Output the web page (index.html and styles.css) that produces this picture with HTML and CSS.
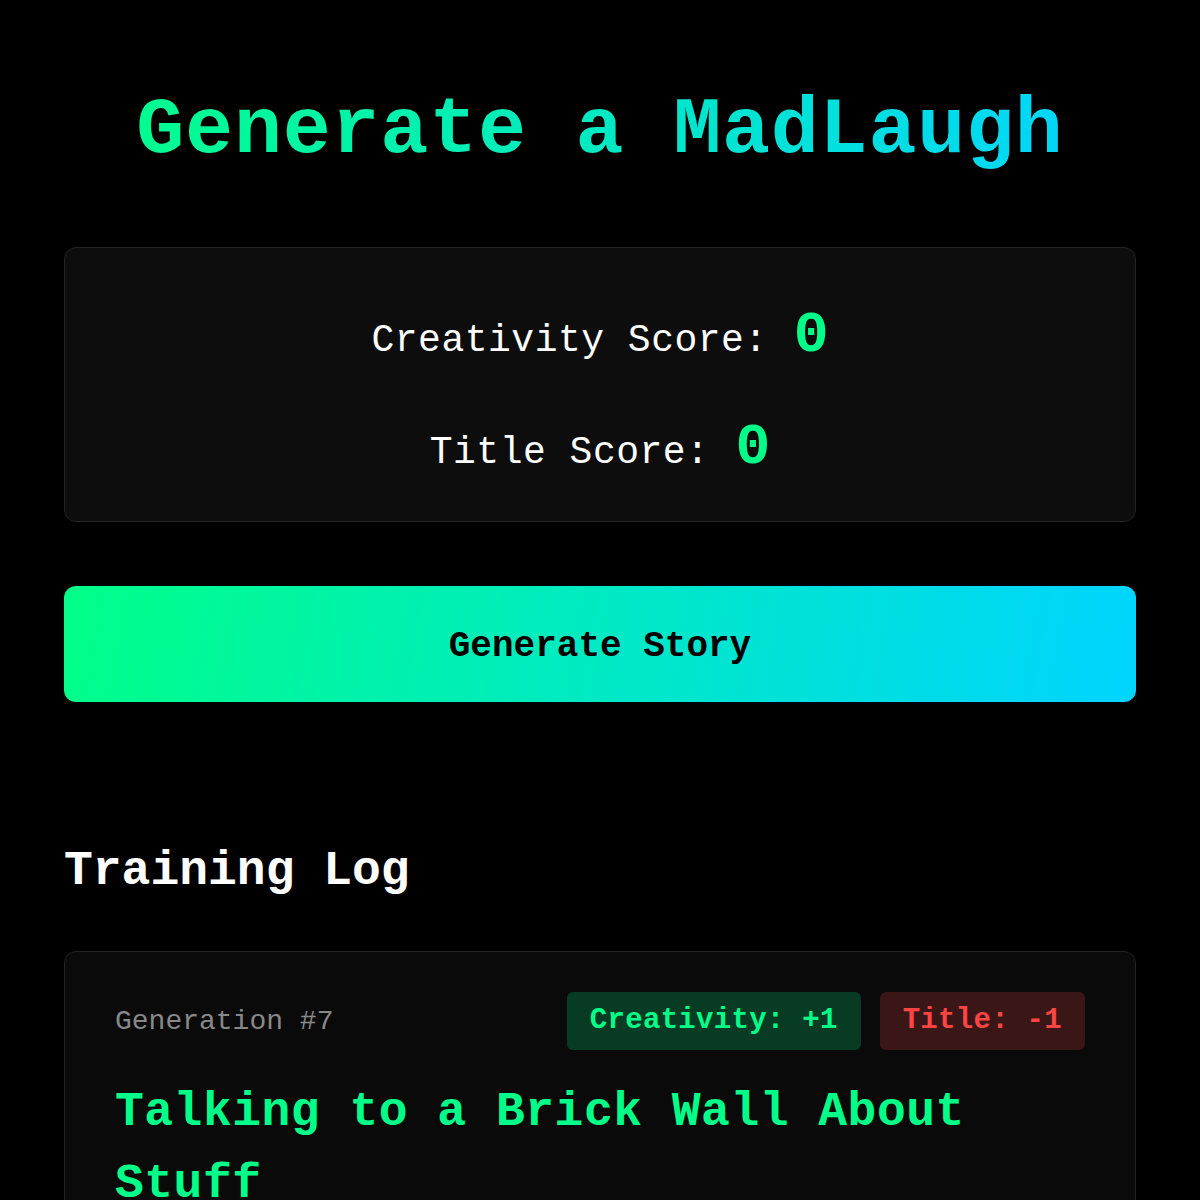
FILE: index.html
```html
<!DOCTYPE html>
<html lang="en">
<head>
    <meta charset="UTF-8">
    <meta name="viewport" content="width=device-width, initial-scale=1.0">
    <title>Generate a MadLaugh</title>
    <link rel="stylesheet" href="styles.css">
</head>
<body>
    <div class="container">
        <h1 class="title">Generate a MadLaugh</h1>

        <!-- Scores -->
        <div class="score-card">
            <div class="score-row">
                <span class="score-label">Creativity Score:</span>
                <span class="score-value" id="creativityScore">0</span>
            </div>
            <div class="score-row">
                <span class="score-label">Title Score:</span>
                <span class="score-value" id="titleScore">0</span>
            </div>
        </div>

        <button type="button" class="generate-btn" id="generateBtn">Generate Story</button>

        <!-- Log -->
        <h2 class="log-heading">Training Log</h2>

        <div class="log-entry">
            <div class="log-header">
                <span class="log-gen">Generation #7</span>
                <div class="badges">
                    <span class="badge badge-up">Creativity: +1</span>
                    <span class="badge badge-down">Title: -1</span>
                </div>
            </div>
            <h3 class="story-title">Talking to a Brick Wall About Stuff</h3>
        </div>
    </div>
</body>
</html>
```

FILE: styles.css
```css
body, html {
    margin: 0;
    background-color: #000;
    color: #fff;
    font-family: "Liberation Mono", "DejaVu Sans Mono", monospace;
}

.container {
    max-width: 1072px;
    margin: 0 auto;
    padding: 40px 64px 0;
}

.title {
    margin: 43px 0 68px;
    font-size: 80px;
    line-height: 96px;
    font-weight: bold;
    letter-spacing: 0.8px;
    text-align: center;
    background: linear-gradient(90deg, #00ff88, #00d4ff);
    -webkit-background-clip: text;
    background-clip: text;
    color: transparent;
}

.score-card {
    background-color: #0d0d0d;
    border: 1px solid #232323;
    border-radius: 12px;
    padding: 54px 20px 35px;
    display: flex;
    flex-direction: column;
    gap: 40px;
}

.score-row {
    display: flex;
    justify-content: center;
    align-items: baseline;
    gap: 26px;
    line-height: 67px;
}

.score-label {
    font-size: 38px;
    letter-spacing: 0.5px;
}

.score-value {
    font-size: 58px;
    font-weight: bold;
    color: #00ff88;
}

.generate-btn {
    display: block;
    width: 100%;
    margin-top: 64px;
    padding: 39px 20px 33px;
    border: none;
    border-radius: 12px;
    background: linear-gradient(100deg, #00ff88, #00d4ff);
    color: #000;
    font-family: inherit;
    font-size: 36px;
    line-height: 44px;
    font-weight: bold;
    cursor: pointer;
}

.log-heading {
    margin: 141px 0 51px;
    font-size: 48px;
    line-height: 57px;
    font-weight: bold;
}

.log-entry {
    background-color: #0a0a0a;
    border: 1px solid #222;
    border-radius: 12px;
    padding: 40px 50px 50px;
}

.log-header {
    display: flex;
    justify-content: space-between;
    align-items: center;
}

.log-gen {
    font-size: 28px;
    color: #888;
}

.badges {
    display: flex;
    gap: 19px;
}

.badge {
    font-size: 29px;
    line-height: 35px;
    font-weight: bold;
    letter-spacing: 0.3px;
    padding: 11px 23px 12px;
    border-radius: 6px;
}

.badge-up {
    background-color: rgba(0, 255, 136, 0.2);
    color: #00ff88;
}

.badge-down {
    background-color: rgba(255, 68, 68, 0.2);
    color: #ff4444;
}

.story-title {
    margin: 26px 0 0;
    font-size: 48px;
    line-height: 72px;
    font-weight: bold;
    letter-spacing: 0.5px;
    color: #00ff88;
}
```
